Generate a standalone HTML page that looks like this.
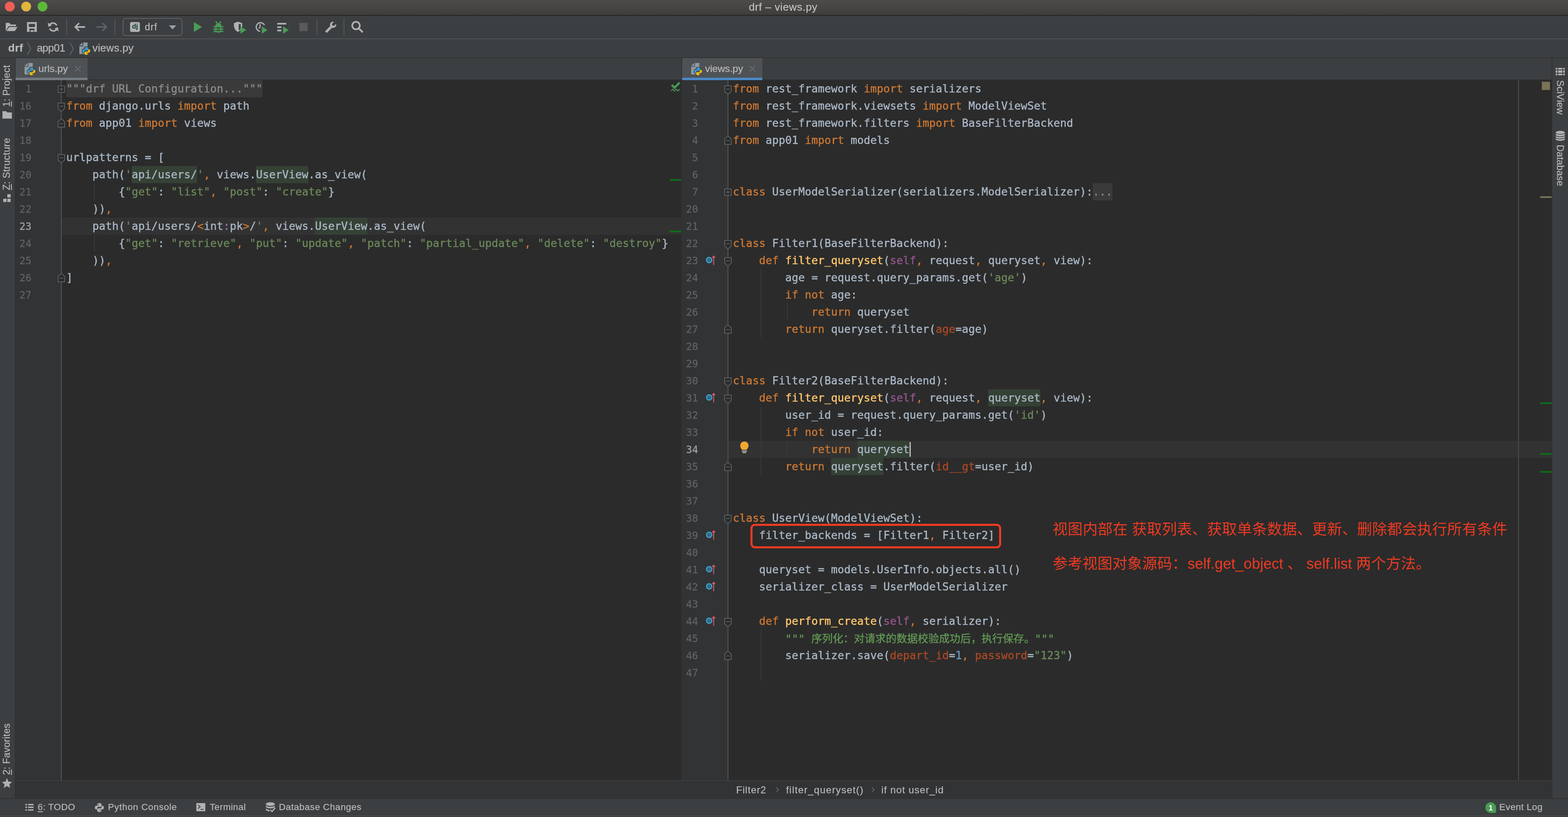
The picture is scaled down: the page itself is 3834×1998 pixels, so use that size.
<!DOCTYPE html>
<html lang="zh"><head><meta charset="utf-8"><title>drf – views.py</title>
<style>
*{box-sizing:border-box;margin:0;padding:0}
html,body{width:3834px;height:1998px;overflow:hidden;background:#3c3f41}
body{position:relative;font-family:"Liberation Sans","Noto Sans CJK SC",sans-serif;font-size:26px;color:#bbbbbb}
.abs{position:absolute}
#root{position:absolute;left:0;top:0;width:3834px;height:1998px;will-change:transform}
.ui{-webkit-text-stroke-width:0.25px;position:absolute;white-space:pre;line-height:30px;height:30px;color:#bbbbbb}
.ed{background:#2b2b2b}
.gut{background:#313335}
.row{-webkit-text-stroke-width:0.5px;position:absolute;height:42px;line-height:42px;white-space:pre;font-family:"DejaVu Sans Mono","Liberation Mono","Noto Sans CJK SC",monospace;font-size:26.5px;letter-spacing:0.046px;color:#a9b7c6}
.ln{-webkit-text-stroke-width:0.35px;position:absolute;height:42px;line-height:42px;text-align:right;font-family:"DejaVu Sans Mono","Liberation Mono",monospace;font-size:24.5px;padding-top:0.6px;color:#606366;white-space:pre}
.ln.cur{color:#a4a3a3}
.k{color:#cc7832}.s{color:#6a8759}.f{color:#ffc66d}.self{color:#94558d}.n{color:#aa4926}.num{color:#6897bb}.p{color:#9876aa}
.d{color:#629755;font-style:italic}
.dc{color:#629755;font-family:"Noto Sans CJK SC",sans-serif;font-size:26px;letter-spacing:0;position:relative;top:-1.5px}
.fold{color:#8c8c8c;background:#3a3a3a;display:inline-block;height:42px}
.hl{background:#344134;display:inline-block;height:42px}
.inj{background:#364135;display:inline-block;height:42px}
.caret{display:inline-block;width:3px;height:36px;background:#bbbbbb;vertical-align:top;margin-top:3px;margin-right:-3px}
.curline{position:absolute;height:42px;background:#323232}
.guide{position:absolute;width:2px;background:#393939}
.vt{-webkit-text-stroke-width:0.25px;position:absolute;white-space:pre;line-height:30px;height:30px;color:#bbbbbb;transform-origin:0 0}
u{text-decoration:underline;text-underline-offset:2.5px;text-decoration-thickness:2px}
.pyicon{position:absolute}
</style></head><body><div id="root">

<div class="abs" style="left:0;top:0;width:3834px;height:37px;background:linear-gradient(#4d4c4b,#3e3d3c)"></div>
<div class="abs" style="left:0;top:37px;width:3834px;height:1px;background:#0c0c0c"></div>
<div class="abs" style="left:12px;top:4px;width:24px;height:24px;border-radius:12px;background:#ee5f57"></div>
<div class="abs" style="left:52px;top:4px;width:24px;height:24px;border-radius:12px;background:#e0b53c"></div>
<div class="abs" style="left:92px;top:4px;width:24px;height:24px;border-radius:12px;background:#5db83a"></div>
<div class="abs" style="left:0;top:38px;width:3834px;height:56px;background:#3c3f41"></div>
<div class="abs" style="left:0;top:94px;width:3834px;height:2px;background:#515355"></div>
<div class="abs" style="left:0;top:96px;width:3834px;height:44px;background:#3c3f41"></div>
<div class="abs" style="left:0;top:140px;width:3834px;height:2px;background:#323232"></div>
<svg class="abs" style="left:14px;top:54px" width="30" height="24" viewBox="0 0 30 24"><path d="M0 2H9L12 6H25V10H7L0 22Z" fill="#afb1b3"/><path d="M8.5 12H29L22 22H1.5Z" fill="#afb1b3"/></svg>
<svg class="abs" style="left:66px;top:54px" width="24" height="24" viewBox="0 0 24 24"><path fill-rule="evenodd" d="M0 0H24V24H18V16H6V24H0ZM4.5 4.5V12H19.5V4.5Z" fill="#afb1b3"/><path d="M8.5 20H16.5V24H8.5Z" fill="#afb1b3"/></svg>
<svg class="abs" style="left:116px;top:53px" width="28" height="26" viewBox="0 0 28 26"><path d="M22.5 9.5A9.6 9.6 0 0 0 5.2 8.2" fill="none" stroke="#afb1b3" stroke-width="3.6"/><path d="M1 2.5L2.2 12.6L11.2 9Z" fill="#afb1b3"/><path d="M5.5 16.5A9.6 9.6 0 0 0 22.8 17.8" fill="none" stroke="#afb1b3" stroke-width="3.6"/><path d="M27 23.5L25.8 13.4L16.8 17Z" fill="#afb1b3"/></svg>
<div class="abs" style="left:162px;top:46px;width:2px;height:40px;background:#555759"></div>
<div class="abs" style="left:280px;top:46px;width:2px;height:40px;background:#555759"></div>
<div class="abs" style="left:774px;top:46px;width:2px;height:40px;background:#555759"></div>
<div class="abs" style="left:840px;top:46px;width:2px;height:40px;background:#555759"></div>
<svg class="abs" style="left:181px;top:54px" width="28" height="24" viewBox="0 0 28 24"><path d="M12.5 2.5L3 12L12.5 21.5M3.5 12H27" fill="none" stroke="#afb1b3" stroke-width="3.8"/></svg>
<svg class="abs" style="left:235px;top:54px" width="28" height="24" viewBox="0 0 28 24"><path d="M15.5 2.5L25 12L15.5 21.5M24.5 12H1" fill="none" stroke="#5d6062" stroke-width="3.8"/></svg>
<div class="abs" style="left:300px;top:44px;width:146px;height:44px;border:2px solid #5f6162;border-radius:7px"></div>
<div class="abs" style="left:318px;top:54px;width:24px;height:24px;border-radius:4px;background:#afb1b3;color:#0c3c26;font:bold 16.5px/21px 'Liberation Sans',sans-serif;text-align:center;letter-spacing:0px">dj</div>
<div class="ui" style="left:354px;top:45.9px;height:40px;line-height:40px;font-size:23.5px;letter-spacing:1.193px;color:#bbbbbb;">drf</div>
<svg class="abs" style="left:413px;top:62px" width="18" height="10" viewBox="0 0 18 10"><path d="M0 0H18L9 10Z" fill="#9da0a3"/></svg>
<svg class="abs" style="left:474px;top:54px" width="20" height="24" viewBox="0 0 20 24"><path d="M0 0L20 12L0 24Z" fill="#499c54"/></svg>
<svg class="abs" style="left:521px;top:51px" width="26" height="30" viewBox="0 0 26 30"><path d="M6.6 1.3L11.6 7.5M19.4 1.3L14.6 7.5" stroke="#499c54" stroke-width="3"/><path d="M13 6C17.8 6 20.6 9 20.6 13V21C20.6 25.5 17.8 29 13 29C8.2 29 5.4 25.5 5.4 21V13C5.4 9 8.2 6 13 6Z" fill="#499c54"/><path d="M0.7 14.3H25.3M0.7 20.5H25.3M0.7 26H25.3" stroke="#499c54" stroke-width="2.8"/><path d="M8.2 17.3H17.8M8.2 23.3H17.8" stroke="#3c3f41" stroke-width="3"/></svg>
<svg class="abs" style="left:571px;top:53px" width="32" height="30" viewBox="0 0 32 30"><path fill-rule="evenodd" d="M1 3.4L10.8 0L21.3 3.4V9C21.3 16 17 22 10.8 25.2C4.5 22 1 16 1 9ZM12.7 5.8H17.6V14C17.6 17.5 15 20.3 12.7 21.8Z" fill="#afb1b3"/><path d="M17 11.5L31 20.5L17 29.5Z" fill="#499c54"/></svg>
<svg class="abs" style="left:623px;top:52px" width="32" height="31" viewBox="0 0 32 31"><path d="M23.5 9.5A10.5 10.5 0 1 0 13 24.5" fill="none" stroke="#afb1b3" stroke-width="3"/><path d="M13 6.5V14L9.5 18" fill="none" stroke="#afb1b3" stroke-width="2.6"/><path d="M17 12.5L31 21.5L17 30.5Z" fill="#499c54"/></svg>
<svg class="abs" style="left:677px;top:55px" width="30" height="28" viewBox="0 0 30 28"><path d="M1 1H23V5H1ZM1 9.5H11V13.5H1ZM1 17.5H11V21.5H1Z" fill="#afb1b3"/><path d="M15 9.5L29 18.5L15 27.5Z" fill="#499c54"/></svg>
<div class="abs" style="left:732px;top:56px;width:20px;height:20px;background:#5a5a5a"></div>
<svg class="abs" style="left:794px;top:51px" width="30" height="30" viewBox="0 0 30 30"><path d="M3 27.5L16.5 14" stroke="#afb1b3" stroke-width="6"/><path d="M22.5 2.2A7.6 7.6 0 1 0 27.8 7.5L22.5 12.2L18.5 11.5L17.8 7.5Z" fill="#afb1b3"/></svg>
<svg class="abs" style="left:859px;top:51px" width="30" height="30" viewBox="0 0 30 30"><circle cx="11.5" cy="11.5" r="9.2" fill="none" stroke="#afb1b3" stroke-width="4"/><path d="M18 18L28 28" stroke="#afb1b3" stroke-width="4.4"/></svg>
<div class="ui" style="left:1831px;top:-3.5px;height:40px;line-height:40px;font-size:26px;letter-spacing:0.647px;color:#c3c2c0;">drf – views.py</div>
<div class="ui" style="left:20px;top:97.0px;height:40px;line-height:40px;font-size:26px;letter-spacing:0.781px;color:#bbbbbb;font-weight:bold;">drf</div>
<svg class="abs" style="left:65px;top:103px" width="12" height="32" viewBox="0 0 12 32"><path d="M1.5 1L10.5 16L1.5 31" fill="none" stroke="#6c6f71" stroke-width="1.6"/></svg>
<div class="ui" style="left:90px;top:97.0px;height:40px;line-height:40px;font-size:26px;letter-spacing:-0.658px;color:#bbbbbb;">app01</div>
<svg class="abs" style="left:169px;top:103px" width="12" height="32" viewBox="0 0 12 32"><path d="M1.5 1L10.5 16L1.5 31" fill="none" stroke="#6c6f71" stroke-width="1.6"/></svg>
<svg class="pyicon" style="left:194px;top:104px" width="28" height="31" viewBox="0 0 28 31"><path d="M9.5 0H20V28H0V9.5H9.5Z" fill="#8d9aa3"/><path d="M7.5 0V7.5H0Z" fill="#8d9aa3"/><g transform="translate(7.3,11) scale(0.96)"><path d="M9.7 0C6.6 0 5.2 1.3 5.2 3.1V5.2H10V6H3.2C1.3 6 0 7.5 0 10.1C0 12.7 1.2 14.2 3.1 14.2H5V11.6C5 9.8 6.5 8.4 8.3 8.4H12.1C13.6 8.4 14.8 7.2 14.8 5.7V3.1C14.8 1.4 13 0 9.7 0Z" fill="#3c3f41" stroke="#3c3f41" stroke-width="3" stroke-linejoin="round"/><path d="M10.3 20C13.4 20 14.8 18.7 14.8 16.9V14.8H10V14H16.8C18.7 14 20 12.5 20 9.9C20 7.3 18.8 5.8 16.9 5.8H15V8.4C15 10.2 13.5 11.6 11.7 11.6H7.9C6.4 11.6 5.2 12.8 5.2 14.3V16.9C5.2 18.6 7 20 10.3 20Z" fill="#3c3f41" stroke="#3c3f41" stroke-width="3" stroke-linejoin="round"/><path d="M9.7 0C6.6 0 5.2 1.3 5.2 3.1V5.2H10V6H3.2C1.3 6 0 7.5 0 10.1C0 12.7 1.2 14.2 3.1 14.2H5V11.6C5 9.8 6.5 8.4 8.3 8.4H12.1C13.6 8.4 14.8 7.2 14.8 5.7V3.1C14.8 1.4 13 0 9.7 0Z" fill="#3b9dd2" /><path d="M10.3 20C13.4 20 14.8 18.7 14.8 16.9V14.8H10V14H16.8C18.7 14 20 12.5 20 9.9C20 7.3 18.8 5.8 16.9 5.8H15V8.4C15 10.2 13.5 11.6 11.7 11.6H7.9C6.4 11.6 5.2 12.8 5.2 14.3V16.9C5.2 18.6 7 20 10.3 20Z" fill="#f2bd1c" /><circle cx="7.4" cy="2.7" r="1" fill="#2b2b2b"/><circle cx="12.6" cy="17.3" r="1" fill="#2b2b2b"/></g></svg>
<div class="ui" style="left:226px;top:97.0px;height:40px;line-height:40px;font-size:26px;letter-spacing:0.163px;color:#bbbbbb;">views.py</div>
<div class="abs" style="left:0;top:142px;width:36px;height:1811px;background:#3c3f41"></div>
<div class="abs" style="left:36px;top:142px;width:2px;height:1811px;background:#323232"></div>
<div class="abs" style="left:3796px;top:142px;width:38px;height:1811px;background:#3c3f41"></div>
<div class="abs" style="left:3794px;top:142px;width:2px;height:1811px;background:#323232"></div>
<div class="abs" style="left:38px;top:142px;width:3756px;height:52px;background:#3c3f41"></div>
<div class="abs" style="left:38px;top:194px;width:3756px;height:2px;background:#323232"></div>
<div class="abs" style="left:38px;top:142px;width:176px;height:48px;background:#4e5254"></div>
<div class="abs" style="left:38px;top:190px;width:176px;height:6px;background:#747a80"></div>
<svg class="pyicon" style="left:60px;top:154px" width="28" height="31" viewBox="0 0 28 31"><path d="M9.5 0H20V28H0V9.5H9.5Z" fill="#8d9aa3"/><path d="M7.5 0V7.5H0Z" fill="#8d9aa3"/><g transform="translate(7.3,11) scale(0.96)"><path d="M9.7 0C6.6 0 5.2 1.3 5.2 3.1V5.2H10V6H3.2C1.3 6 0 7.5 0 10.1C0 12.7 1.2 14.2 3.1 14.2H5V11.6C5 9.8 6.5 8.4 8.3 8.4H12.1C13.6 8.4 14.8 7.2 14.8 5.7V3.1C14.8 1.4 13 0 9.7 0Z" fill="#3c3f41" stroke="#3c3f41" stroke-width="3" stroke-linejoin="round"/><path d="M10.3 20C13.4 20 14.8 18.7 14.8 16.9V14.8H10V14H16.8C18.7 14 20 12.5 20 9.9C20 7.3 18.8 5.8 16.9 5.8H15V8.4C15 10.2 13.5 11.6 11.7 11.6H7.9C6.4 11.6 5.2 12.8 5.2 14.3V16.9C5.2 18.6 7 20 10.3 20Z" fill="#3c3f41" stroke="#3c3f41" stroke-width="3" stroke-linejoin="round"/><path d="M9.7 0C6.6 0 5.2 1.3 5.2 3.1V5.2H10V6H3.2C1.3 6 0 7.5 0 10.1C0 12.7 1.2 14.2 3.1 14.2H5V11.6C5 9.8 6.5 8.4 8.3 8.4H12.1C13.6 8.4 14.8 7.2 14.8 5.7V3.1C14.8 1.4 13 0 9.7 0Z" fill="#3b9dd2" /><path d="M10.3 20C13.4 20 14.8 18.7 14.8 16.9V14.8H10V14H16.8C18.7 14 20 12.5 20 9.9C20 7.3 18.8 5.8 16.9 5.8H15V8.4C15 10.2 13.5 11.6 11.7 11.6H7.9C6.4 11.6 5.2 12.8 5.2 14.3V16.9C5.2 18.6 7 20 10.3 20Z" fill="#f2bd1c" /><circle cx="7.4" cy="2.7" r="1" fill="#2b2b2b"/><circle cx="12.6" cy="17.3" r="1" fill="#2b2b2b"/></g></svg>
<div class="ui" style="left:94px;top:147.5px;height:40px;line-height:40px;font-size:24.5px;letter-spacing:-0.022px;color:#bbbbbb;">urls.py</div>
<svg class="abs" style="left:182px;top:160px" width="16" height="16" viewBox="0 0 16 16"><path d="M1 1L15 15M15 1L1 15" stroke="#6e7679" stroke-width="1.7"/></svg>
<div class="abs" style="left:1668px;top:142px;width:196px;height:48px;background:#4e5254"></div>
<div class="abs" style="left:1668px;top:190px;width:196px;height:6px;background:#4a88c7"></div>
<svg class="pyicon" style="left:1690px;top:154px" width="28" height="31" viewBox="0 0 28 31"><path d="M9.5 0H20V28H0V9.5H9.5Z" fill="#8d9aa3"/><path d="M7.5 0V7.5H0Z" fill="#8d9aa3"/><g transform="translate(7.3,11) scale(0.96)"><path d="M9.7 0C6.6 0 5.2 1.3 5.2 3.1V5.2H10V6H3.2C1.3 6 0 7.5 0 10.1C0 12.7 1.2 14.2 3.1 14.2H5V11.6C5 9.8 6.5 8.4 8.3 8.4H12.1C13.6 8.4 14.8 7.2 14.8 5.7V3.1C14.8 1.4 13 0 9.7 0Z" fill="#3c3f41" stroke="#3c3f41" stroke-width="3" stroke-linejoin="round"/><path d="M10.3 20C13.4 20 14.8 18.7 14.8 16.9V14.8H10V14H16.8C18.7 14 20 12.5 20 9.9C20 7.3 18.8 5.8 16.9 5.8H15V8.4C15 10.2 13.5 11.6 11.7 11.6H7.9C6.4 11.6 5.2 12.8 5.2 14.3V16.9C5.2 18.6 7 20 10.3 20Z" fill="#3c3f41" stroke="#3c3f41" stroke-width="3" stroke-linejoin="round"/><path d="M9.7 0C6.6 0 5.2 1.3 5.2 3.1V5.2H10V6H3.2C1.3 6 0 7.5 0 10.1C0 12.7 1.2 14.2 3.1 14.2H5V11.6C5 9.8 6.5 8.4 8.3 8.4H12.1C13.6 8.4 14.8 7.2 14.8 5.7V3.1C14.8 1.4 13 0 9.7 0Z" fill="#3b9dd2" /><path d="M10.3 20C13.4 20 14.8 18.7 14.8 16.9V14.8H10V14H16.8C18.7 14 20 12.5 20 9.9C20 7.3 18.8 5.8 16.9 5.8H15V8.4C15 10.2 13.5 11.6 11.7 11.6H7.9C6.4 11.6 5.2 12.8 5.2 14.3V16.9C5.2 18.6 7 20 10.3 20Z" fill="#f2bd1c" /><circle cx="7.4" cy="2.7" r="1" fill="#2b2b2b"/><circle cx="12.6" cy="17.3" r="1" fill="#2b2b2b"/></g></svg>
<div class="ui" style="left:1724px;top:147.5px;height:40px;line-height:40px;font-size:24.5px;letter-spacing:-0.118px;color:#bbbbbb;">views.py</div>
<svg class="abs" style="left:1832px;top:160px" width="16" height="16" viewBox="0 0 16 16"><path d="M1 1L15 15M15 1L1 15" stroke="#6e7679" stroke-width="1.7"/></svg>
<div class="abs ed" style="left:38px;top:196px;width:1628px;height:1712px"></div>
<div class="abs gut" style="left:38px;top:196px;width:111px;height:1712px"></div>
<div class="curline" style="left:151px;top:532px;width:1515px"></div>
<div class="abs" style="left:149px;top:196px;width:2px;height:1712px;background:#555555"></div>
<div class="ln" style="left:-3px;top:196px;width:80px">1</div>
<div class="row" style="left:162px;top:196px"><span class="fold">"""drf URL Configuration..."""</span></div>
<div class="ln" style="left:-3px;top:238px;width:80px">16</div>
<div class="row" style="left:162px;top:238px"><span class="k">from</span> django.urls <span class="k">import</span> path</div>
<div class="ln" style="left:-3px;top:280px;width:80px">17</div>
<div class="row" style="left:162px;top:280px"><span class="k">from</span> app01 <span class="k">import</span> views</div>
<div class="ln" style="left:-3px;top:322px;width:80px">18</div>
<div class="ln" style="left:-3px;top:364px;width:80px">19</div>
<div class="row" style="left:162px;top:364px">urlpatterns = [</div>
<div class="ln" style="left:-3px;top:406px;width:80px">20</div>
<div class="row" style="left:162px;top:406px">    path(<span class="s">'</span><span class="inj">api/users/</span><span class="s">'</span><span class="k">,</span> views.<span class="hl">UserView</span>.as_view(</div>
<div class="ln" style="left:-3px;top:448px;width:80px">21</div>
<div class="row" style="left:162px;top:448px">        {<span class="s">"get"</span>: <span class="s">"list"</span><span class="k">,</span> <span class="s">"post"</span>: <span class="s">"create"</span>}</div>
<div class="ln" style="left:-3px;top:490px;width:80px">22</div>
<div class="row" style="left:162px;top:490px">    ))<span class="k">,</span></div>
<div class="ln cur" style="left:-3px;top:532px;width:80px">23</div>
<div class="row" style="left:162px;top:532px">    path(<span class="s">'</span>api/users/<span class="k">&lt;</span>int<span class="p">:</span>pk<span class="k">&gt;</span>/<span class="s">'</span><span class="k">,</span> views.<span class="hl">UserView</span>.as_view(</div>
<div class="ln" style="left:-3px;top:574px;width:80px">24</div>
<div class="row" style="left:162px;top:574px">        {<span class="s">"get"</span>: <span class="s">"retrieve"</span><span class="k">,</span> <span class="s">"put"</span>: <span class="s">"update"</span><span class="k">,</span> <span class="s">"patch"</span>: <span class="s">"partial_update"</span><span class="k">,</span> <span class="s">"delete"</span>: <span class="s">"destroy"</span>}</div>
<div class="ln" style="left:-3px;top:616px;width:80px">25</div>
<div class="row" style="left:162px;top:616px">    ))<span class="k">,</span></div>
<div class="ln" style="left:-3px;top:658px;width:80px">26</div>
<div class="row" style="left:162px;top:658px">]</div>
<div class="ln" style="left:-3px;top:700px;width:80px">27</div>
<div class="abs" style="left:1666px;top:142px;width:2px;height:1766px;background:#323232"></div>
<div class="abs ed" style="left:1668px;top:196px;width:2126px;height:1712px"></div>
<div class="abs gut" style="left:1668px;top:196px;width:111px;height:1712px"></div>
<div class="curline" style="left:1781px;top:1078px;width:2013px"></div>
<div class="abs" style="left:1779px;top:196px;width:2px;height:1712px;background:#555555"></div>
<div class="ln" style="left:1627px;top:196px;width:80px">1</div>
<div class="row" style="left:1792px;top:196px"><span class="k">from</span> rest_framework <span class="k">import</span> serializers</div>
<div class="ln" style="left:1627px;top:238px;width:80px">2</div>
<div class="row" style="left:1792px;top:238px"><span class="k">from</span> rest_framework.viewsets <span class="k">import</span> ModelViewSet</div>
<div class="ln" style="left:1627px;top:280px;width:80px">3</div>
<div class="row" style="left:1792px;top:280px"><span class="k">from</span> rest_framework.filters <span class="k">import</span> BaseFilterBackend</div>
<div class="ln" style="left:1627px;top:322px;width:80px">4</div>
<div class="row" style="left:1792px;top:322px"><span class="k">from</span> app01 <span class="k">import</span> models</div>
<div class="ln" style="left:1627px;top:364px;width:80px">5</div>
<div class="ln" style="left:1627px;top:406px;width:80px">6</div>
<div class="ln" style="left:1627px;top:448px;width:80px">7</div>
<div class="row" style="left:1792px;top:448px"><span class="k">class</span> UserModelSerializer(serializers.ModelSerializer):<span class="fold">...</span></div>
<div class="ln" style="left:1627px;top:490px;width:80px">20</div>
<div class="ln" style="left:1627px;top:532px;width:80px">21</div>
<div class="ln" style="left:1627px;top:574px;width:80px">22</div>
<div class="row" style="left:1792px;top:574px"><span class="k">class</span> Filter1(BaseFilterBackend):</div>
<div class="ln" style="left:1627px;top:616px;width:80px">23</div>
<div class="row" style="left:1792px;top:616px">    <span class="k">def</span> <span class="f">filter_queryset</span>(<span class="self">self</span><span class="k">,</span> request<span class="k">,</span> queryset<span class="k">,</span> view):</div>
<div class="ln" style="left:1627px;top:658px;width:80px">24</div>
<div class="row" style="left:1792px;top:658px">        age = request.query_params.get(<span class="s">'age'</span>)</div>
<div class="ln" style="left:1627px;top:700px;width:80px">25</div>
<div class="row" style="left:1792px;top:700px">        <span class="k">if not</span> age:</div>
<div class="ln" style="left:1627px;top:742px;width:80px">26</div>
<div class="row" style="left:1792px;top:742px">            <span class="k">return</span> queryset</div>
<div class="ln" style="left:1627px;top:784px;width:80px">27</div>
<div class="row" style="left:1792px;top:784px">        <span class="k">return</span> queryset.filter(<span class="n">age</span>=age)</div>
<div class="ln" style="left:1627px;top:826px;width:80px">28</div>
<div class="ln" style="left:1627px;top:868px;width:80px">29</div>
<div class="ln" style="left:1627px;top:910px;width:80px">30</div>
<div class="row" style="left:1792px;top:910px"><span class="k">class</span> Filter2(BaseFilterBackend):</div>
<div class="ln" style="left:1627px;top:952px;width:80px">31</div>
<div class="row" style="left:1792px;top:952px">    <span class="k">def</span> <span class="f">filter_queryset</span>(<span class="self">self</span><span class="k">,</span> request<span class="k">,</span> <span class="hl">queryset</span><span class="k">,</span> view):</div>
<div class="ln" style="left:1627px;top:994px;width:80px">32</div>
<div class="row" style="left:1792px;top:994px">        user_id = request.query_params.get(<span class="s">'id'</span>)</div>
<div class="ln" style="left:1627px;top:1036px;width:80px">33</div>
<div class="row" style="left:1792px;top:1036px">        <span class="k">if not</span> user_id:</div>
<div class="ln cur" style="left:1627px;top:1078px;width:80px">34</div>
<div class="row" style="left:1792px;top:1078px">            <span class="k">return</span> <span class="hl">queryset</span><i class="caret"></i></div>
<div class="ln" style="left:1627px;top:1120px;width:80px">35</div>
<div class="row" style="left:1792px;top:1120px">        <span class="k">return</span> <span class="hl">queryset</span>.filter(<span class="n">id__gt</span>=user_id)</div>
<div class="ln" style="left:1627px;top:1162px;width:80px">36</div>
<div class="ln" style="left:1627px;top:1204px;width:80px">37</div>
<div class="ln" style="left:1627px;top:1246px;width:80px">38</div>
<div class="row" style="left:1792px;top:1246px"><span class="k">class</span> UserView(ModelViewSet):</div>
<div class="ln" style="left:1627px;top:1288px;width:80px">39</div>
<div class="row" style="left:1792px;top:1288px">    filter_backends = [Filter1<span class="k">,</span> Filter2]</div>
<div class="ln" style="left:1627px;top:1330px;width:80px">40</div>
<div class="ln" style="left:1627px;top:1372px;width:80px">41</div>
<div class="row" style="left:1792px;top:1372px">    queryset = models.UserInfo.objects.all()</div>
<div class="ln" style="left:1627px;top:1414px;width:80px">42</div>
<div class="row" style="left:1792px;top:1414px">    serializer_class = UserModelSerializer</div>
<div class="ln" style="left:1627px;top:1456px;width:80px">43</div>
<div class="ln" style="left:1627px;top:1498px;width:80px">44</div>
<div class="row" style="left:1792px;top:1498px">    <span class="k">def</span> <span class="f">perform_create</span>(<span class="self">self</span><span class="k">,</span> serializer):</div>
<div class="ln" style="left:1627px;top:1540px;width:80px">45</div>
<div class="row" style="left:1792px;top:1540px">        <span class="d">""" </span><span class="dc">序列化：对请求的数据校验成功后，执行保存。</span><span class="d">"""</span></div>
<div class="ln" style="left:1627px;top:1582px;width:80px">46</div>
<div class="row" style="left:1792px;top:1582px">        serializer.save(<span class="n">depart_id</span>=<span class="num">1</span><span class="k">,</span> <span class="n">password</span>=<span class="s">"123"</span>)</div>
<div class="ln" style="left:1627px;top:1624px;width:80px">47</div>
<div class="guide" style="left:230px;top:448px;height:42px"></div>
<div class="guide" style="left:230px;top:574px;height:42px"></div>
<div class="guide" style="left:1860px;top:658px;height:168px"></div>
<div class="guide" style="left:1924px;top:742px;height:42px"></div>
<div class="guide" style="left:1860px;top:994px;height:168px"></div>
<div class="guide" style="left:1924px;top:1078px;height:42px"></div>
<div class="guide" style="left:1860px;top:1540px;height:126px"></div>
<div class="abs" style="left:3712px;top:196px;width:2px;height:1712px;background:#4d4d4d"></div>
<svg class="abs" style="left:141px;top:209px" width="18" height="18" viewBox="0 0 18 18"><path d="M1 1H17V17H1Z" fill="#2b2b2b" stroke="#5c5e5f" stroke-width="2"/><path d="M4.5 9H13.5M9 4.5V13.5" stroke="#5c5e5f" stroke-width="2"/></svg>
<svg class="abs" style="left:141px;top:251px" width="18" height="24" viewBox="0 0 18 24"><path d="M1 1H17V14.2L9 21.8L1 14.2Z" fill="#2b2b2b" stroke="#5c5e5f" stroke-width="2"/><path d="M4.5 9H13.5" stroke="#5c5e5f" stroke-width="2"/></svg>
<svg class="abs" style="left:141px;top:288px" width="18" height="24" viewBox="0 0 18 24"><path d="M1 23H17V9.8L9 2.2L1 9.8Z" fill="#2b2b2b" stroke="#5c5e5f" stroke-width="2"/><path d="M4.5 14.2H13.5" stroke="#5c5e5f" stroke-width="2"/></svg>
<svg class="abs" style="left:141px;top:377px" width="18" height="24" viewBox="0 0 18 24"><path d="M1 1H17V14.2L9 21.8L1 14.2Z" fill="#2b2b2b" stroke="#5c5e5f" stroke-width="2"/><path d="M4.5 9H13.5" stroke="#5c5e5f" stroke-width="2"/></svg>
<svg class="abs" style="left:141px;top:666px" width="18" height="24" viewBox="0 0 18 24"><path d="M1 23H17V9.8L9 2.2L1 9.8Z" fill="#2b2b2b" stroke="#5c5e5f" stroke-width="2"/><path d="M4.5 14.2H13.5" stroke="#5c5e5f" stroke-width="2"/></svg>
<svg class="abs" style="left:1771px;top:209px" width="18" height="24" viewBox="0 0 18 24"><path d="M1 1H17V14.2L9 21.8L1 14.2Z" fill="#2b2b2b" stroke="#5c5e5f" stroke-width="2"/><path d="M4.5 9H13.5" stroke="#5c5e5f" stroke-width="2"/></svg>
<svg class="abs" style="left:1771px;top:330px" width="18" height="24" viewBox="0 0 18 24"><path d="M1 23H17V9.8L9 2.2L1 9.8Z" fill="#2b2b2b" stroke="#5c5e5f" stroke-width="2"/><path d="M4.5 14.2H13.5" stroke="#5c5e5f" stroke-width="2"/></svg>
<svg class="abs" style="left:1771px;top:461px" width="18" height="18" viewBox="0 0 18 18"><path d="M1 1H17V17H1Z" fill="#2b2b2b" stroke="#5c5e5f" stroke-width="2"/><path d="M4.5 9H13.5M9 4.5V13.5" stroke="#5c5e5f" stroke-width="2"/></svg>
<svg class="abs" style="left:1771px;top:587px" width="18" height="24" viewBox="0 0 18 24"><path d="M1 1H17V14.2L9 21.8L1 14.2Z" fill="#2b2b2b" stroke="#5c5e5f" stroke-width="2"/><path d="M4.5 9H13.5" stroke="#5c5e5f" stroke-width="2"/></svg>
<svg class="abs" style="left:1771px;top:629px" width="18" height="24" viewBox="0 0 18 24"><path d="M1 1H17V14.2L9 21.8L1 14.2Z" fill="#2b2b2b" stroke="#5c5e5f" stroke-width="2"/><path d="M4.5 9H13.5" stroke="#5c5e5f" stroke-width="2"/></svg>
<svg class="abs" style="left:1771px;top:792px" width="18" height="24" viewBox="0 0 18 24"><path d="M1 23H17V9.8L9 2.2L1 9.8Z" fill="#2b2b2b" stroke="#5c5e5f" stroke-width="2"/><path d="M4.5 14.2H13.5" stroke="#5c5e5f" stroke-width="2"/></svg>
<svg class="abs" style="left:1771px;top:923px" width="18" height="24" viewBox="0 0 18 24"><path d="M1 1H17V14.2L9 21.8L1 14.2Z" fill="#2b2b2b" stroke="#5c5e5f" stroke-width="2"/><path d="M4.5 9H13.5" stroke="#5c5e5f" stroke-width="2"/></svg>
<svg class="abs" style="left:1771px;top:965px" width="18" height="24" viewBox="0 0 18 24"><path d="M1 1H17V14.2L9 21.8L1 14.2Z" fill="#2b2b2b" stroke="#5c5e5f" stroke-width="2"/><path d="M4.5 9H13.5" stroke="#5c5e5f" stroke-width="2"/></svg>
<svg class="abs" style="left:1771px;top:1128px" width="18" height="24" viewBox="0 0 18 24"><path d="M1 23H17V9.8L9 2.2L1 9.8Z" fill="#2b2b2b" stroke="#5c5e5f" stroke-width="2"/><path d="M4.5 14.2H13.5" stroke="#5c5e5f" stroke-width="2"/></svg>
<svg class="abs" style="left:1771px;top:1259px" width="18" height="24" viewBox="0 0 18 24"><path d="M1 1H17V14.2L9 21.8L1 14.2Z" fill="#2b2b2b" stroke="#5c5e5f" stroke-width="2"/><path d="M4.5 9H13.5" stroke="#5c5e5f" stroke-width="2"/></svg>
<svg class="abs" style="left:1771px;top:1511px" width="18" height="24" viewBox="0 0 18 24"><path d="M1 1H17V14.2L9 21.8L1 14.2Z" fill="#2b2b2b" stroke="#5c5e5f" stroke-width="2"/><path d="M4.5 9H13.5" stroke="#5c5e5f" stroke-width="2"/></svg>
<svg class="abs" style="left:1771px;top:1590px" width="18" height="24" viewBox="0 0 18 24"><path d="M1 23H17V9.8L9 2.2L1 9.8Z" fill="#2b2b2b" stroke="#5c5e5f" stroke-width="2"/><path d="M4.5 14.2H13.5" stroke="#5c5e5f" stroke-width="2"/></svg>
<svg class="abs" style="left:1725px;top:623px" width="28" height="28" viewBox="0 0 28 28"><circle cx="9" cy="13" r="5.9" fill="none" stroke="#3a95bf" stroke-width="4.2"/><circle cx="9" cy="13" r="2.2" fill="#3a95bf"/><path d="M20 25V5" stroke="#db5860" stroke-width="2.3"/><path d="M15.2 7.4L20 1.2L25 7.4Z" fill="#db5860"/></svg>
<svg class="abs" style="left:1725px;top:959px" width="28" height="28" viewBox="0 0 28 28"><circle cx="9" cy="13" r="5.9" fill="none" stroke="#3a95bf" stroke-width="4.2"/><circle cx="9" cy="13" r="2.2" fill="#3a95bf"/><path d="M20 25V5" stroke="#db5860" stroke-width="2.3"/><path d="M15.2 7.4L20 1.2L25 7.4Z" fill="#db5860"/></svg>
<svg class="abs" style="left:1725px;top:1295px" width="28" height="28" viewBox="0 0 28 28"><circle cx="9" cy="13" r="5.9" fill="none" stroke="#3a95bf" stroke-width="4.2"/><circle cx="9" cy="13" r="2.2" fill="#3a95bf"/><path d="M20 25V5" stroke="#db5860" stroke-width="2.3"/><path d="M15.2 7.4L20 1.2L25 7.4Z" fill="#db5860"/></svg>
<svg class="abs" style="left:1725px;top:1379px" width="28" height="28" viewBox="0 0 28 28"><circle cx="9" cy="13" r="5.9" fill="none" stroke="#3a95bf" stroke-width="4.2"/><circle cx="9" cy="13" r="2.2" fill="#3a95bf"/><path d="M20 25V5" stroke="#db5860" stroke-width="2.3"/><path d="M15.2 7.4L20 1.2L25 7.4Z" fill="#db5860"/></svg>
<svg class="abs" style="left:1725px;top:1421px" width="28" height="28" viewBox="0 0 28 28"><circle cx="9" cy="13" r="5.9" fill="none" stroke="#3a95bf" stroke-width="4.2"/><circle cx="9" cy="13" r="2.2" fill="#3a95bf"/><path d="M20 25V5" stroke="#db5860" stroke-width="2.3"/><path d="M15.2 7.4L20 1.2L25 7.4Z" fill="#db5860"/></svg>
<svg class="abs" style="left:1725px;top:1505px" width="28" height="28" viewBox="0 0 28 28"><circle cx="9" cy="13" r="5.9" fill="none" stroke="#3a95bf" stroke-width="4.2"/><circle cx="9" cy="13" r="2.2" fill="#3a95bf"/><path d="M20 25V5" stroke="#db5860" stroke-width="2.3"/><path d="M15.2 7.4L20 1.2L25 7.4Z" fill="#db5860"/></svg>
<svg class="abs" style="left:1809px;top:1079px" width="23" height="31" viewBox="0 0 23 31"><path d="M11.1 0.8C5 0.8 0.9 5.5 0.9 11C0.9 15.5 3.8 17.5 5 21H17.2C18.4 17.5 21.3 15.5 21.3 11C21.3 5.5 17.2 0.8 11.1 0.8Z" fill="#f0a732"/><path d="M5 23H17.2V25.2H5ZM6 26.8H16.2L14.8 29H7.4Z" fill="#c8cacc"/></svg>
<svg class="abs" style="left:1638px;top:198px" width="28" height="28" viewBox="0 0 28 28"><path d="M4.4 9.7L11.4 16.4L23.5 4.1" fill="none" stroke="#499c54" stroke-width="5"/><path d="M2.8 24.6L7.4 19.9L11.4 24.8L15.4 19.9L19.4 24.8L24.2 20" fill="none" stroke="#499c54" stroke-width="2"/></svg>
<div class="abs" style="left:1638px;top:438px;width:28px;height:4px;background:#0a7017"></div>
<div class="abs" style="left:1638px;top:564px;width:28px;height:4px;background:#0a7017"></div>
<div class="abs" style="left:3770px;top:200px;width:20px;height:20px;background:#7a7358"></div>
<div class="abs" style="left:3766px;top:480px;width:28px;height:4px;background:#7a7358"></div>
<div class="abs" style="left:3766px;top:984px;width:28px;height:4px;background:#0a7017"></div>
<div class="abs" style="left:3766px;top:1108px;width:28px;height:4px;background:#0a7017"></div>
<div class="abs" style="left:3766px;top:1152px;width:28px;height:4px;background:#0a7017"></div>
<div class="abs" style="left:1835px;top:1281px;width:613px;height:60px;border:5px solid #ee3a22;border-radius:11px"></div>
<div class="abs" style="left:2574px;top:1271px;white-space:pre;font-size:36.5px;letter-spacing:0.2px;line-height:48px;color:#ee3a22">视图内部在 获取列表、获取单条数据、更新、删除都会执行所有条件</div>
<div class="abs" style="left:2574px;top:1355px;white-space:pre;font-size:36.5px;line-height:48px;color:#ee3a22">参考视图对象源码<span style="margin-right:-9px">：</span> <span style="letter-spacing:-0.1px">self.get_object</span> 、 <span style="letter-spacing:0px">self.list</span> 两个方法。</div>
<div class="abs" style="left:38px;top:1908px;width:3756px;height:45px;background:#313335"></div>
<div class="abs" style="left:38px;top:1908px;width:3756px;height:2px;background:#3a3c3e"></div>
<div class="ui" style="left:1800px;top:1911.7px;height:40px;line-height:40px;font-size:24px;letter-spacing:1.046px;color:#bbbbbb;">Filter2</div>
<svg class="abs" style="left:1897px;top:1925px" width="8" height="13" viewBox="0 0 8 13"><path d="M1.5 1.2L6.5 6.5L1.5 11.8" fill="none" stroke="#63666a" stroke-width="1.9"/></svg>
<div class="ui" style="left:1922px;top:1911.7px;height:40px;line-height:40px;font-size:24px;letter-spacing:1.37px;color:#bbbbbb;">filter_queryset()</div>
<svg class="abs" style="left:2131px;top:1925px" width="8" height="13" viewBox="0 0 8 13"><path d="M1.5 1.2L6.5 6.5L1.5 11.8" fill="none" stroke="#63666a" stroke-width="1.9"/></svg>
<div class="ui" style="left:2155px;top:1911.7px;height:40px;line-height:40px;font-size:24px;letter-spacing:1.114px;color:#bbbbbb;">if not user_id</div>
<div class="abs" style="left:0;top:1953px;width:3834px;height:45px;background:#3c3f41"></div>
<div class="abs" style="left:0;top:1952px;width:3834px;height:2px;background:#323232"></div>
<div class="abs" style="left:0;top:1994px;width:3834px;height:2px;background:#4a4947"></div>
<svg class="abs" style="left:62px;top:1966px" width="20" height="17" viewBox="0 0 20 17"><path d="M0 0H4V3.4H0ZM6.5 0H20V3.4H6.5ZM0 6.6H4V10H0ZM6.5 6.6H20V10H6.5ZM0 13.2H4V16.6H0ZM6.5 13.2H20V16.6H6.5Z" fill="#afb1b3"/></svg>
<div class="ui" style="left:92px;top:1954.2px;height:40px;line-height:40px;font-size:22.5px;letter-spacing:0.401px;color:#bbbbbb;"><u>6</u>: TODO</div>
<svg class="abs" style="left:232px;top:1964px" width="22" height="22" viewBox="0 0 20 20"><path d="M9.7 0C6.6 0 5.2 1.3 5.2 3.1V5.2H10V6H3.2C1.3 6 0 7.5 0 10.1C0 12.7 1.2 14.2 3.1 14.2H5V11.6C5 9.8 6.5 8.4 8.3 8.4H12.1C13.6 8.4 14.8 7.2 14.8 5.7V3.1C14.8 1.4 13 0 9.7 0Z" fill="#afb1b3"/><circle cx="7.4" cy="2.7" r="1" fill="#3c3f41"/><path d="M10.3 20C13.4 20 14.8 18.7 14.8 16.9V14.8H10V14H16.8C18.7 14 20 12.5 20 9.9C20 7.3 18.8 5.8 16.9 5.8H15V8.4C15 10.2 13.5 11.6 11.7 11.6H7.9C6.4 11.6 5.2 12.8 5.2 14.3V16.9C5.2 18.6 7 20 10.3 20Z" fill="#afb1b3"/><circle cx="12.6" cy="17.3" r="1" fill="#3c3f41"/></svg>
<div class="ui" style="left:264px;top:1954.2px;height:40px;line-height:40px;font-size:22.5px;letter-spacing:0.726px;color:#bbbbbb;">Python Console</div>
<svg class="abs" style="left:480px;top:1964px" width="22" height="20" viewBox="0 0 22 20"><path d="M0 0H22V20H0Z" fill="#afb1b3"/><path d="M4 4.5L9.5 9L4 13.5M10.5 15.5H17.5" fill="none" stroke="#3c3f41" stroke-width="2"/></svg>
<div class="ui" style="left:513px;top:1954.2px;height:40px;line-height:40px;font-size:22.5px;letter-spacing:0.373px;color:#bbbbbb;">Terminal</div>
<svg class="abs" style="left:650px;top:1962px" width="24" height="25" viewBox="0 0 24 25"><ellipse cx="11" cy="4.5" rx="11" ry="4.5" fill="#afb1b3"/><path d="M0 7.5C2 10.5 6 11 11 11C16 11 20 10.5 22 7.5V11.5C20 14 16 15 11 15C6 15 2 14 0 11.5Z" fill="#afb1b3"/><path d="M0 14.5C2 17.5 5 18 9 18.3V22.3C5 22 2 21 0 18.5Z" fill="#afb1b3"/><path d="M0 21.5C1.5 23.3 3.5 24 6 24.5V20.5Z" fill="#afb1b3" opacity="0"/><path d="M11 18.5L15 22.5L23 13.5" fill="none" stroke="#afb1b3" stroke-width="3"/></svg>
<div class="ui" style="left:682px;top:1954.2px;height:40px;line-height:40px;font-size:22.5px;letter-spacing:0.586px;color:#bbbbbb;">Database Changes</div>
<div class="abs" style="left:3632px;top:1962px;width:26px;height:26px;border-radius:13px 13px 2px 13px;background:#499c54;color:#fff;font:bold 19px/27px 'Liberation Sans',sans-serif;text-align:center">1</div>
<div class="ui" style="left:3666px;top:1954.2px;height:40px;line-height:40px;font-size:22.5px;letter-spacing:0.52px;color:#bbbbbb;">Event Log</div>
<div class="vt" style="left:-4.1px;top:261.0px;height:40px;line-height:40px;font-size:23.5px;letter-spacing:0.274px;color:#bbbbbb;transform:rotate(-90deg)"><u>1</u>: Project</div>
<svg class="abs" style="left:6px;top:272px" width="23" height="18" viewBox="0 0 23 18"><path d="M0 0H9L12 3H23V18H0Z" fill="#afb1b3"/></svg>
<div class="vt" style="left:-4.1px;top:465.0px;height:40px;line-height:40px;font-size:23.5px;letter-spacing:0.438px;color:#bbbbbb;transform:rotate(-90deg)"><u>Z</u>: Structure</div>
<svg class="abs" style="left:8px;top:475px" width="18" height="19" viewBox="0 0 18 19"><path d="M10 0H18V8H10ZM0 11H8V19H0ZM10 11H18V19H10Z" fill="#afb1b3"/></svg>
<div class="vt" style="left:-4.1px;top:1895.0px;height:40px;line-height:40px;font-size:23.5px;letter-spacing:0.27px;color:#bbbbbb;transform:rotate(-90deg)"><u>2</u>: Favorites</div>
<svg class="abs" style="left:4px;top:1902px" width="26" height="26" viewBox="0 0 26 26"><path d="M13 1L16.6 9.6L25.5 10.3L18.7 16.2L20.8 25L13 20.2L5.2 25L7.3 16.2L0.5 10.3L9.4 9.6Z" fill="#afb1b3"/></svg>
<svg class="abs" style="left:3804px;top:166px" width="23" height="18" viewBox="0 0 23 18"><path d="M0 0H4.1V4.1H0ZM6 0H16.2V4.1H6ZM18.1 0H22.2V4.1H18.1ZM0 6H4.1V12H0ZM6 6H16.2V12H6ZM18.1 6H22.2V12H18.1ZM0 14H4.1V18H0ZM6 14H16.2V18H6ZM18.1 14H22.2V18H18.1Z" fill="#afb1b3"/></svg>
<div class="vt" style="left:3835.1px;top:196.0px;height:40px;line-height:40px;font-size:23.5px;letter-spacing:0.12px;color:#bbbbbb;transform:rotate(90deg)">SciView</div>
<svg class="abs" style="left:3804px;top:320px" width="23" height="25" viewBox="0 0 23 25"><path d="M0 4V20.6A11.2 3.9 0 0 0 22.4 20.6V4A11.2 3.9 0 0 0 0 4Z" fill="#afb1b3"/><path d="M-0.5 4.6A11.7 3.9 0 0 0 22.9 4.6M-0.5 10.5A11.7 3.9 0 0 0 22.9 10.5M-0.5 15.8A11.7 3.9 0 0 0 22.9 15.8" fill="none" stroke="#3c3f41" stroke-width="1.5"/></svg>
<div class="vt" style="left:3835.1px;top:354.0px;height:40px;line-height:40px;font-size:23.5px;letter-spacing:0.051px;color:#bbbbbb;transform:rotate(90deg)">Database</div>
</div></body></html>
